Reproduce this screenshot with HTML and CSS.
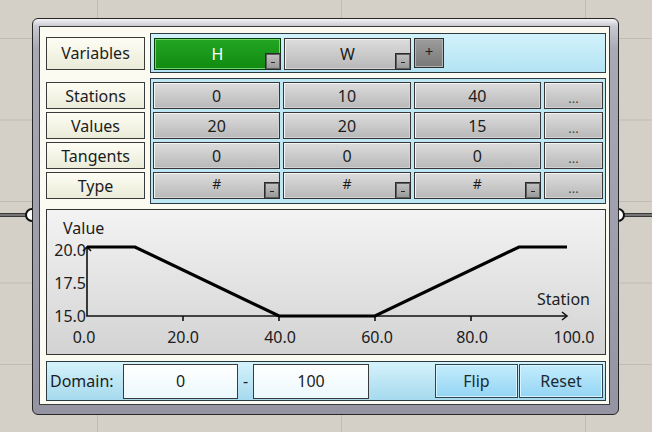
FILE: index.html
```html
<!DOCTYPE html>
<html lang="en">
<head>
    <meta charset="UTF-8">
    <title>Graph Mapper</title>
    <link rel="stylesheet" href="styles.css">
</head>
<body>
    <!-- wires and ports sit on the canvas, under the component -->
    <div class="wire wire-in"></div>
    <div class="wire wire-out"></div>
    <span class="port port-in"></span>
    <span class="port port-out"></span>

    <div class="component">
        <div class="body">
            <!-- Variables -->
            <div class="row vars-row">
                <div class="label">Variables</div>
                <div class="panel vars">
                    <button class="btn var active">H<span class="minus"></span></button>
                    <button class="btn var">W<span class="minus"></span></button>
                    <button class="add">+</button>
                </div>
            </div>

            <!-- Stations table -->
            <div class="row table-row">
                <div class="labels">
                    <div class="label">Stations</div>
                    <div class="label">Values</div>
                    <div class="label">Tangents</div>
                    <div class="label">Type</div>
                </div>
                <div class="panel table">
                    <button class="btn">0</button>
                    <button class="btn">10</button>
                    <button class="btn">40</button>
                    <button class="btn more">...</button>

                    <button class="btn">20</button>
                    <button class="btn">20</button>
                    <button class="btn">15</button>
                    <button class="btn more">...</button>

                    <button class="btn">0</button>
                    <button class="btn">0</button>
                    <button class="btn">0</button>
                    <button class="btn more">...</button>

                    <button class="btn type">#<span class="minus"></span></button>
                    <button class="btn type">#<span class="minus"></span></button>
                    <button class="btn type">#<span class="minus"></span></button>
                    <button class="btn more">...</button>
                </div>
            </div>

            <!-- Graph -->
            <div class="panel graph">
                <svg class="plot" width="558" height="144" viewBox="0 0 558 144">
                    <g class="axis">
                        <polyline points="40,37 40,106 520,106"/>
                        <polyline points="36,41 40,37 44,41"/>
                        <polyline points="515,102 520,106 515,110"/>
                        <line x1="136" y1="106" x2="136" y2="111"/>
                        <line x1="232" y1="106" x2="232" y2="111"/>
                        <line x1="328" y1="106" x2="328" y2="111"/>
                        <line x1="424" y1="106" x2="424" y2="111"/>
                    </g>
                    <polyline class="curve" points="40,37 88,37 232,106 328,106 472,37 520,37"/>

                    <text x="16" y="24">Value</text>
                    <text x="490" y="95">Station</text>

                    <text class="end" x="39" y="46">20.0</text>
                    <text class="end" x="39" y="79">17.5</text>
                    <text class="end" x="39" y="112">15.0</text>

                    <text class="mid" x="37" y="133">0.0</text>
                    <text class="mid" x="136" y="133">20.0</text>
                    <text class="mid" x="233" y="133">40.0</text>
                    <text class="mid" x="330" y="133">60.0</text>
                    <text class="mid" x="425" y="133">80.0</text>
                    <text class="mid" x="527" y="133">100.0</text>
                </svg>
            </div>

            <!-- Domain -->
            <div class="panel domain">
                <span class="domain-label">Domain:</span>
                <input class="field" type="text" value="0">
                <span class="dash">-</span>
                <input class="field wide" type="text" value="100">
                <span class="spacer"></span>
                <button class="action">Flip</button>
                <button class="action reset">Reset</button>
            </div>
        </div>
    </div>
</body>
</html>
```

FILE: styles.css
```css
* {
    margin: 0;
    padding: 0;
    box-sizing: border-box;
}

body {
    width: 652px;
    height: 432px;
    overflow: hidden;
    position: relative;
    font-family: "Noto Sans", "Open Sans", sans-serif;
    font-size: 16px;
    color: #1c1c1c;
    background-color: #d4d0c8;
    background-image:
        linear-gradient(to right, #c0bcb4 1px, transparent 1px),
        linear-gradient(to bottom, #c0bcb4 1px, transparent 1px);
    background-size: 244px 100%, 100% 81.5px;
    background-position: 97px 0, 0 38px;
}

/* Canvas wires */
.wire {
    position: absolute;
    top: 213px;
    height: 4px;
    background: #747474;
    border-top: 1px solid #3a3a3a;
    border-bottom: 1px solid #3a3a3a;
}

.wire-in {
    left: 0;
    width: 30px;
}

.wire-out {
    left: 620px;
    width: 32px;
}

.port {
    position: absolute;
    top: 208px;
    width: 14px;
    height: 14px;
    border: 2px solid #111;
    border-radius: 50%;
    background: #fff;
}

.port-in {
    left: 25px;
}

.port-out {
    left: 611px;
}

/* Component frame */
.component {
    position: absolute;
    left: 32px;
    top: 18px;
    width: 587px;
    height: 397px;
    border: 1px solid #262626;
    border-radius: 6px;
    padding: 7px 8px 9px 6px;
    background: linear-gradient(to bottom, #f4f4f6 0, #c9c9d1 7px, #a9a9b6 30px, #9494a3 100%);
}

.body {
    height: 100%;
    border: 1px solid #3b3b3b;
    background: #fbfbf2;
    padding: 6px 3px 3px 6px;
    display: flex;
    flex-direction: column;
}

.row {
    display: flex;
    gap: 5px;
}

.vars-row {
    height: 40px;
    align-items: center;
    margin-bottom: 5px;
}

.table-row {
    height: 126px;
    margin-bottom: 5px;
}

.label {
    width: 99px;
    background: linear-gradient(#fdfdf4, #ebebd9);
    border: 1px solid #3a3a3a;
    display: flex;
    align-items: center;
    justify-content: center;
}

.vars-row .label {
    height: 33px;
}

.labels {
    display: flex;
    flex-direction: column;
    gap: 3px;
    padding-top: 4px;
}

.labels .label {
    height: 27px;
}

.panel {
    border: 1px solid #2c3b41;
}

/* Buttons */
.btn {
    position: relative;
    font: inherit;
    color: #1c1c1c;
    border: 1px solid #363636;
    background: linear-gradient(#dddddd, #b8b8b8);
    box-shadow: inset 1px 1px 0 #f4f4f4, inset -1px -1px 0 #d2d2d2;
    display: flex;
    align-items: center;
    justify-content: center;
}

.btn.active {
    color: #fff;
    border-color: #0b3b0b;
    background: linear-gradient(#22a622, #118a11);
    box-shadow: inset 0 0 0 1px #6cd86c;
}

.btn.more {
    font-size: 13px;
    color: #444;
    padding-top: 4px;
}

.btn.type {
    font-size: 14px;
    padding-bottom: 4px;
}

.minus {
    position: absolute;
    right: -1px;
    bottom: -1px;
    width: 16px;
    height: 17px;
    border: 1px solid #2a2a2a;
    background: linear-gradient(#c2c2c2, #979797);
    box-shadow: inset 0 0 0 1px #5e5e5e;
}

.minus::after {
    content: "";
    position: absolute;
    left: 5px;
    top: 8px;
    width: 4px;
    height: 1px;
    background: #2a2a2a;
}

.vars {
    flex: 1;
    height: 40px;
    display: flex;
    align-items: flex-start;
    gap: 3px;
    padding: 4px 3px;
    background: linear-gradient(#d2f2fb, #b3e3f3);
}

.var {
    width: 127px;
    height: 32px;
}

.add {
    width: 30px;
    height: 30px;
    font: inherit;
    font-size: 15px;
    color: #222;
    border: 1px solid #2e2e2e;
    background: linear-gradient(#9c9c9c, #787878);
    box-shadow: inset 0 0 0 1px #b2b2b2;
    padding-bottom: 5px;
}

.table {
    flex: 1;
    display: grid;
    grid-template-columns: 1fr 1fr 1fr 59px;
    grid-auto-rows: 27px;
    gap: 3px;
    padding: 3px 2px 4px 2px;
    background: #bfe7f3;
}

/* Graph */
.graph {
    height: 146px;
    margin-bottom: 6px;
    border-color: #333;
    background: linear-gradient(#f3f3f3, #d3d3d3);
}

.plot {
    display: block;
}

.plot text {
    font-family: "Noto Sans", "Open Sans", sans-serif;
    font-size: 16px;
    fill: #1c1c1c;
}

.plot text.end {
    text-anchor: end;
}

.plot text.mid {
    text-anchor: middle;
}

.axis {
    stroke: #111;
    stroke-width: 1.6;
    fill: none;
}

.curve {
    stroke: #000;
    stroke-width: 3.2;
    fill: none;
}

/* Domain */
.domain {
    height: 40px;
    display: flex;
    align-items: center;
    background: linear-gradient(#d5f2fb, #a6daee);
}

.domain-label {
    width: 76px;
    padding-left: 3px;
}

.field {
    width: 115px;
    height: 35px;
    font: inherit;
    color: #1c1c1c;
    text-align: center;
    border: 1px solid #3a3a3a;
    background: linear-gradient(#ffffff, #ebf8fc);
    outline: none;
}

.field.wide {
    width: 116px;
}

.dash {
    width: 15px;
    text-align: center;
}

.spacer {
    flex: 1;
}

.action {
    width: 83px;
    height: 34px;
    font: inherit;
    color: #1c2a30;
    border: 1px solid #2b4450;
    background: linear-gradient(#c4ecfc, #93d5f4);
    box-shadow: inset 0 0 0 1px #d9f5ff;
    margin-right: 1px;
}

.action.reset {
    width: 84px;
    margin-right: 2px;
}
```
